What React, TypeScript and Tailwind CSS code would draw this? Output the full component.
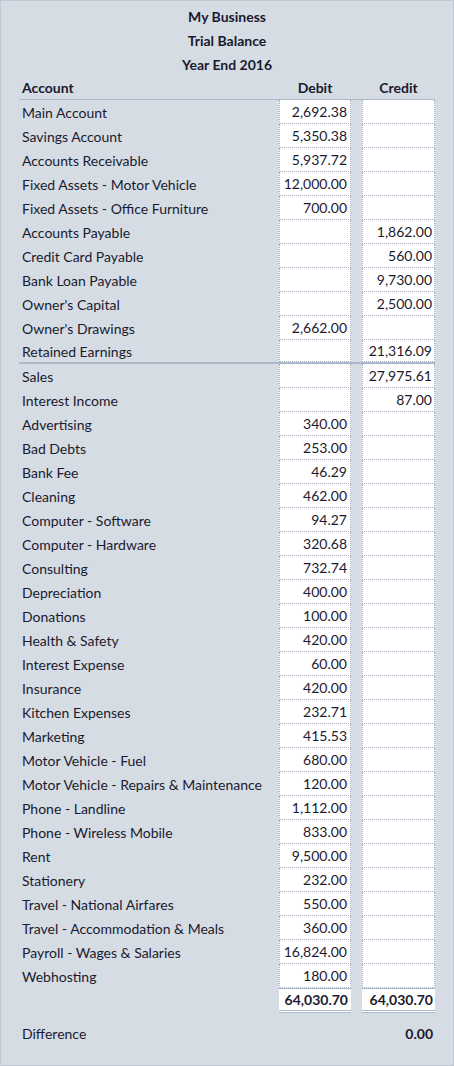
const rows: [string, string, string][] = [
  ["Main Account", "2,692.38", ""],
  ["Savings Account", "5,350.38", ""],
  ["Accounts Receivable", "5,937.72", ""],
  ["Fixed Assets - Motor Vehicle", "12,000.00", ""],
  ["Fixed Assets - Office Furniture", "700.00", ""],
  ["Accounts Payable", "", "1,862.00"],
  ["Credit Card Payable", "", "560.00"],
  ["Bank Loan Payable", "", "9,730.00"],
  ["Owner's Capital", "", "2,500.00"],
  ["Owner's Drawings", "2,662.00", ""],
  ["Retained Earnings", "", "21,316.09"],
  ["Sales", "", "27,975.61"],
  ["Interest Income", "", "87.00"],
  ["Advertising", "340.00", ""],
  ["Bad Debts", "253.00", ""],
  ["Bank Fee", "46.29", ""],
  ["Cleaning", "462.00", ""],
  ["Computer - Software", "94.27", ""],
  ["Computer - Hardware", "320.68", ""],
  ["Consulting", "732.74", ""],
  ["Depreciation", "400.00", ""],
  ["Donations", "100.00", ""],
  ["Health & Safety", "420.00", ""],
  ["Interest Expense", "60.00", ""],
  ["Insurance", "420.00", ""],
  ["Kitchen Expenses", "232.71", ""],
  ["Marketing", "415.53", ""],
  ["Motor Vehicle - Fuel", "680.00", ""],
  ["Motor Vehicle - Repairs & Maintenance", "120.00", ""],
  ["Phone - Landline", "1,112.00", ""],
  ["Phone - Wireless Mobile", "833.00", ""],
  ["Rent", "9,500.00", ""],
  ["Stationery", "232.00", ""],
  ["Travel - National Airfares", "550.00", ""],
  ["Travel - Accommodation & Meals", "360.00", ""],
  ["Payroll - Wages & Salaries", "16,824.00", ""],
  ["Webhosting", "180.00", ""],
];

export default function App() {
  return (
    <div className="w-[454px] h-[1066px] bg-[#d6dce4] border border-[#c0c8d4] text-[14px] text-[#1a1a2e] overflow-hidden" style={{ fontFamily: "Lato, 'Open Sans', sans-serif" }}>
      <div className="pt-[3px]">
        <div className="h-6 flex items-center justify-center font-bold">My Business</div>
        <div className="h-6 flex items-center justify-center font-bold">Trial Balance</div>
        <div className="h-6 flex items-center justify-center font-bold">Year End 2016</div>
        <div className="ml-[18px] mr-[18px] h-6 flex items-center font-bold border-b border-[#acb9ca]">
          <div className="flex-1 pl-[3px]">Account</div>
          <div className="w-[72px] text-center">Debit</div>
          <div className="w-[11px]" />
          <div className="w-[73px] text-center">Credit</div>
        </div>
        <div className="ml-[18px] mr-[18px]">
          {rows.map(([a, d, c], i) => (
            <div key={i} className={`h-6 flex ${i === 10 ? "border-b-2 border-[#acb9ca]" : ""}`}>
              <div className="flex-1 pl-[3px] flex items-center">{a}</div>
              <div className="w-[72px] bg-white flex items-center justify-end pr-[3px] border-b border-dotted border-[#a8b0c0] border-l border-r">{d}</div>
              <div className="w-[11px]" />
              <div className="w-[73px] bg-white flex items-center justify-end pr-[2px] border-b border-dotted border-[#a8b0c0] border-l border-r">{c}</div>
            </div>
          ))}
          <div className="h-[25px] flex font-bold">
            <div className="flex-1" />
            <div className="w-[72px] bg-white flex items-center justify-end pr-[3px] border-b-[3px] border-double border-[#acb9ca] border-t border-t-[#acb9ca]">64,030.70</div>
            <div className="w-[11px]" />
            <div className="w-[73px] bg-white flex items-center justify-end pr-[2px] border-b-[3px] border-double border-[#acb9ca] border-t border-t-[#acb9ca]">64,030.70</div>
          </div>
          <div className="h-6 mt-[8px] flex items-center">
            <div className="flex-1 pl-[3px]">Difference</div>
            <div className="font-bold pr-[2px]">0.00</div>
          </div>
        </div>
      </div>
    </div>
  );
}
